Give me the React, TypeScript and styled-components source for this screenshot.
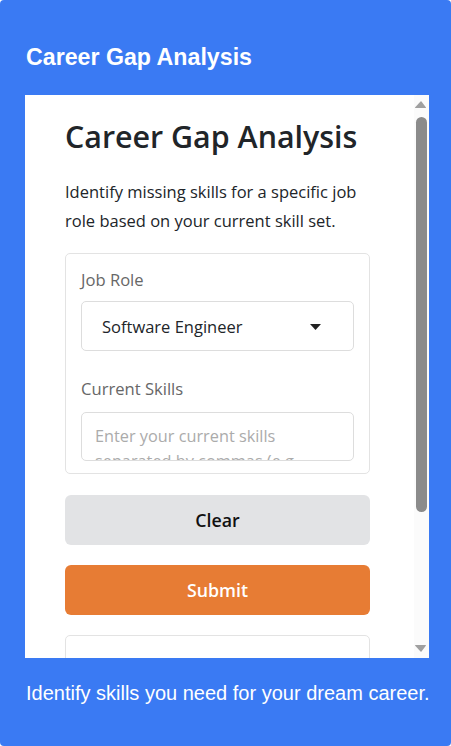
import React from "react";
import styled, { createGlobalStyle } from "styled-components";

const GlobalStyle = createGlobalStyle`
  html, body { margin: 0; padding: 0; background: #ffffff; }
  body { width: 451px; height: 746px; overflow: hidden; }
  * { box-sizing: border-box; }
`;

const Page = styled.div`
  width: 451px;
  height: 746px;
  background: #3a7af3;
  border-radius: 4px;
  padding: 44px 0 0 25px;
  display: flex;
  flex-direction: column;
  font-family: "Liberation Sans", Arial, sans-serif;
  color: #ffffff;
`;

const HeaderTitle = styled.h2`
  margin: 0 0 24px 1px;
  font-size: 23.2px;
  font-weight: 700;
  line-height: normal;
`;

const Frame = styled.div`
  width: 404px;
  height: 563px;
  background: #ffffff;
  display: flex;
  flex-direction: row;
  overflow: hidden;
`;

const Viewport = styled.div`
  flex: 1;
  min-width: 0;
  overflow: hidden;
  font-family: "Open Sans", "Noto Sans", sans-serif;
  color: #212529;
`;

const ScrollRail = styled.div`
  width: 15px;
  flex: none;
  background: #fbfbfb;
  display: flex;
  flex-direction: column;
  align-items: center;
`;

const RailArrow = styled.svg`
  flex: none;
  display: block;
`;

const RailTrack = styled.div`
  flex: 1;
  width: 100%;
  display: flex;
  justify-content: center;
  padding-top: 2px;
`;

const Thumb = styled.div`
  width: 11px;
  height: 395px;
  border-radius: 6px;
  background: #8b8b8b;
  margin-left: -1px;
`;

const Content = styled.div`
  padding: 23px 44px 40px 40px;
  display: flex;
  flex-direction: column;
`;

const Title = styled.h1`
  margin: 0 0 22px;
  font-size: 30.4px;
  font-weight: 600;
  line-height: 1.24;
  color: #212529;
`;

const Lead = styled.p`
  margin: 0 0 18px;
  font-size: 16.5px;
  line-height: 1.75;
  color: #212529;
`;

const Card = styled.div<{ $pad?: string }>`
  border: 1px solid #e3e3e3;
  border-radius: 5px;
  padding: ${(p) => p.$pad ?? "14px 15px 12px"};
  display: flex;
  flex-direction: column;
`;

const Field = styled.div<{ $mb?: number }>`
  display: flex;
  flex-direction: column;
  margin-bottom: ${(p) => p.$mb ?? 0}px;
`;

const Label = styled.label<{ $mb?: number }>`
  font-size: 16.6px;
  line-height: 1.5;
  color: #676767;
  margin-bottom: ${(p) => p.$mb ?? 9}px;
`;

const SelectWrap = styled.div`
  position: relative;
`;

const Select = styled.select`
  appearance: none;
  -webkit-appearance: none;
  width: 100%;
  height: 50px;
  border: 1px solid #dddddd;
  border-radius: 5px;
  background: #ffffff;
  padding: 0 40px 0 20px;
  font-family: "Open Sans", "Noto Sans", sans-serif;
  font-size: 16.5px;
  color: #212529;
  outline: none;
`;

const Caret = styled.svg`
  position: absolute;
  right: 33px;
  top: 23px;
  pointer-events: none;
`;

const TextArea = styled.textarea`
  width: 100%;
  height: 49px;
  border: 1px solid #dddddd;
  border-radius: 5px;
  padding: 11px 13px 0;
  resize: none;
  overflow: hidden;
  font-family: "Open Sans", "Noto Sans", sans-serif;
  font-size: 16.3px;
  line-height: 1.5;
  color: #212529;
  outline: none;
  &::placeholder {
    color: #ababab;
  }
`;

const Button = styled.button<{ $variant: "light" | "primary" }>`
  height: 50px;
  width: 100%;
  border: none;
  border-radius: 6px;
  font-family: "Open Sans", "Noto Sans", sans-serif;
  font-size: 17.8px;
  font-weight: 600;
  background: ${(p) => (p.$variant === "primary" ? "#e77c34" : "#e2e3e5")};
  color: ${(p) => (p.$variant === "primary" ? "#ffffff" : "#111111")};
  margin-top: ${(p) => (p.$variant === "primary" ? 20 : 21)}px;
  cursor: pointer;
`;

const ResultCard = styled(Card)`
  margin-top: 20px;
  min-height: 168px;
`;

const ResultText = styled.p`
  margin: 0;
  font-size: 16.5px;
  line-height: 1.5;
  color: #555555;
`;

const Footer = styled.p`
  margin: 24px 0 0 1px;
  font-size: 20px;
  line-height: normal;
  white-space: nowrap;
  color: #ffffff;
`;

export default function App() {
  return (
    <>
      <GlobalStyle />
      <Page>
        <HeaderTitle>Career Gap Analysis</HeaderTitle>
        <Frame>
          <Viewport>
            <Content>
              <Title>Career Gap Analysis</Title>
              <Lead>
                Identify missing skills for a specific job role based on your current skill set.
              </Lead>
              <Card>
                <Field $mb={26}>
                  <Label htmlFor="role" $mb={8}>Job Role</Label>
                  <SelectWrap>
                    <Select id="role" defaultValue="se">
                      <option value="se">Software Engineer</option>
                      <option value="ds">Data Scientist</option>
                      <option value="pm">Product Manager</option>
                    </Select>
                    <Caret width="11" height="6" viewBox="0 0 11 6">
                      <path d="M0 0 H11 L5.5 6 Z" fill="#222222" />
                    </Caret>
                  </SelectWrap>
                </Field>
                <Field>
                  <Label htmlFor="skills" $mb={10}>Current Skills</Label>
                  <TextArea
                    id="skills"
                    placeholder="Enter your current skills separated by commas (e.g., HTML, CSS)"
                  />
                </Field>
              </Card>
              <Button $variant="light">Clear</Button>
              <Button $variant="primary">Submit</Button>
              <ResultCard $pad="16px 15px">
                <ResultText>Skill gap results will be listed here.</ResultText>
              </ResultCard>
            </Content>
          </Viewport>
          <ScrollRail aria-hidden="true">
            <RailArrow width="15" height="20" viewBox="0 0 15 20">
              <path d="M6.5 6.5 Q7 6 7.5 6.5 L12 12.5 Q12 13 11.5 13 L1.5 13 Q1 13 1 12.5 Z" fill="#a0a0a0" />
            </RailArrow>
            <RailTrack>
              <Thumb />
            </RailTrack>
            <RailArrow width="15" height="20" viewBox="0 0 15 20">
              <path d="M1.5 7 L11.5 7 Q12 7 12 7.5 L7.5 13.5 Q7 14 6.5 13.5 L1 7.5 Q1 7 1.5 7 Z" fill="#a0a0a0" />
            </RailArrow>
          </ScrollRail>
        </Frame>
        <Footer>Identify skills you need for your dream career.</Footer>
      </Page>
    </>
  );
}
